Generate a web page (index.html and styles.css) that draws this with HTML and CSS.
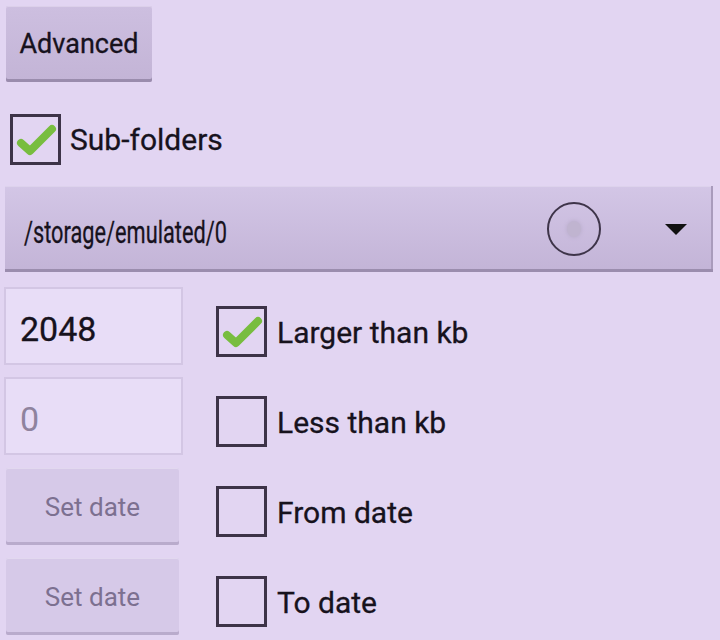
FILE: index.html
```html
<!DOCTYPE html>
<html lang="en">
<head>
    <meta charset="UTF-8">
    <title>Search options</title>
    <link rel="stylesheet" href="styles.css">
</head>
<body>
    <div class="screen">
        <button class="btn btn-advanced">Advanced</button>

        <label class="check-row subfolders">
            <span class="box checked">
                <svg viewBox="0 0 51 51" width="51" height="51"><path d="M11 29 L20 37 L42 15" fill="none" stroke="#78bd3f" stroke-width="8" stroke-linecap="round" stroke-linejoin="round"/></svg>
            </span>
            <span class="label">Sub-folders</span>
        </label>

        <div class="spinner">
            <span class="spinner-text">/storage/emulated/0</span>
            <span class="radio"><span class="dot"></span></span>
            <span class="arrow"></span>
        </div>

        <div class="rows">
            <div class="row">
                <div class="field">2048</div>
                <span class="box checked">
                    <svg viewBox="0 0 51 51" width="51" height="51"><path d="M11 29 L20 37 L42 15" fill="none" stroke="#78bd3f" stroke-width="8" stroke-linecap="round" stroke-linejoin="round"/></svg>
                </span>
                <span class="label">Larger than kb</span>
            </div>
            <div class="row">
                <div class="field hint">0</div>
                <span class="box"></span>
                <span class="label">Less than kb</span>
            </div>
            <div class="row">
                <button class="btn btn-date">Set date</button>
                <span class="box"></span>
                <span class="label">From date</span>
            </div>
            <div class="row">
                <button class="btn btn-date">Set date</button>
                <span class="box"></span>
                <span class="label">To date</span>
            </div>
        </div>
    </div>
</body>
</html>
```
FILE: styles.css
```css
body {
    margin: 0;
    background-color: #e2d5f2;
    font-family: Roboto, 'Noto Sans', sans-serif;
    color: #17121d;
    -webkit-text-stroke: 0.3px;
}

.screen {
    width: 720px;
    height: 640px;
    padding-top: 6px;
    box-sizing: border-box;
}

.btn {
    font-family: inherit;
    border: none;
    border-radius: 2px;
    cursor: pointer;
}

.btn-advanced {
    display: block;
    margin-left: 6px;
    width: 146px;
    height: 76px;
    font-size: 27px;
    color: #17121d;
    background: linear-gradient(#cdbfe0, #c3b4d6);
    box-shadow: inset 0 -3px 0 #9a8cad, inset 0 1px 0 #dcd0ea;
}

.check-row {
    display: flex;
    align-items: center;
    margin: 32px 0 0 10px;
}

.box {
    display: block;
    width: 51px;
    height: 51px;
    box-sizing: border-box;
    border: 3px solid #3d3348;
    flex-shrink: 0;
}

.box svg {
    display: block;
    margin: -3px;
}

.label {
    font-size: 30px;
    margin-left: 10px;
}

.row .label {
    padding-top: 12px;
}

.subfolders .label {
    margin-left: 9px;
}

.spinner {
    display: flex;
    align-items: center;
    margin: 21px 0 0 5px;
    width: 708px;
    height: 86px;
    box-sizing: border-box;
    padding-left: 19px;
    background: linear-gradient(#d3c6e6, #c3b4d7);
    box-shadow: inset 0 -3px 0 #9b8dae, inset -2px 0 0 #a99bbc, inset 0 1px 0 #ddd2ec;
}

.spinner-text {
    font-size: 32px;
    flex: 1;
    padding-top: 5px;
    transform: scaleX(0.68);
    transform-origin: left center;
}

.radio {
    width: 54px;
    height: 54px;
    box-sizing: border-box;
    border: 2px solid #3e3449;
    border-radius: 50%;
    display: flex;
    align-items: center;
    justify-content: center;
    margin-right: 64px;
}

.dot {
    width: 14px;
    height: 16px;
    border-radius: 50%;
    background: #c0b4d0;
    box-shadow: 0 0 4px #b6aac8;
}

.arrow {
    width: 0;
    height: 0;
    border-left: 11px solid transparent;
    border-right: 11px solid transparent;
    border-top: 11px solid #111;
    margin-right: 26px;
}

.rows {
    display: flex;
    flex-direction: column;
    gap: 12px;
    margin-top: 15px;
}

.row {
    display: flex;
    align-items: center;
    height: 78px;
}

.row .box {
    margin-top: 10px;
    margin-left: 33px;
}

.field {
    width: 179px;
    height: 78px;
    margin-left: 4px;
    box-sizing: border-box;
    padding-left: 14px;
    display: flex;
    align-items: center;
    padding-top: 6px;
    font-size: 34px;
    background: #e8ddf7;
    border: 2px solid #d3c6e4;
}

.field.hint {
    color: #8f839e;
    -webkit-text-stroke: 0;
}

.btn-date {
    width: 173px;
    height: 77px;
    margin-left: 6px;
    margin-right: 4px;
    font-size: 26px;
    color: #7c7090;
    -webkit-text-stroke: 0;
    padding-bottom: 0;
    background: #d6c9e8;
    box-shadow: inset 0 -3px 0 #b9abcc, inset 0 1px 0 #e2d8ef;
}
```
